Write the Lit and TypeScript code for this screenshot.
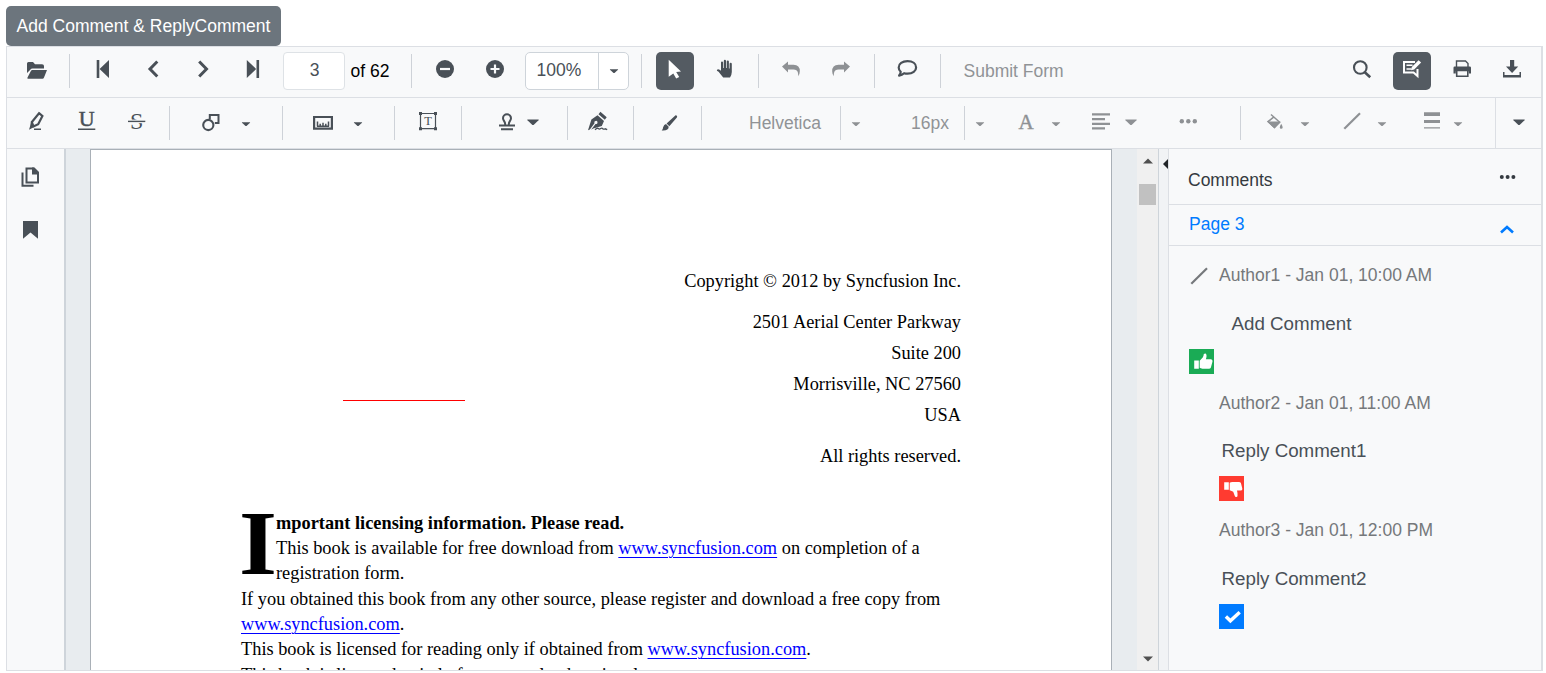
import { LitElement, html, css, svg, nothing } from "lit";
import { customElement, property } from "lit/decorators.js";

const icons: Record<string, unknown> = {
  open: svg`<path d="M2 14V4.500q0-1.500 1.500-1.500H8l2 2.200h7q2 0 2 1.800v2.500H7.500q-1.500 0-2 1z"/><path d="M7.300 11H22l-3 7.500q-.5 1.200-1.500 1.200H3q-1 0-.5-1.200L6 11.800q.4-.8 1.300-.8z"/>`,
  first: svg`<path d="M5.700 1h2.600v18H5.700zM18 1v18L8.600 10z"/>`,
  last: svg`<path d="M15.500 1h2.600v18h-2.600zM5.800 1v18L15.200 10z"/>`,
  prev: svg`<path class="line" stroke-width="3" d="M16.300 2.500 9 10l7.300 7.500"/>`,
  next: svg`<path class="line" stroke-width="3" d="M8.200 2.500 15.500 10l-7.300 7.500"/>`,
  minus: svg`<circle cx="12" cy="10" r="9"/><path fill="#f8f9fa" d="M7 8.900h10v2.200H7z"/>`,
  plus: svg`<circle cx="12" cy="10" r="9"/><path fill="#f8f9fa" d="M7.500 8.900h9v2.200h-9zM10.900 5.500h2.200v9h-2.200z"/>`,
  cursor: svg`<path d="M5.700.7 18 12.600l-4.800.3 3 5-3 1.700-2.900-5.200-4.600 3.300z"/>`,
  hand: svg`<path d="M7 3.600q0-1.200 1-1.200t1.100 1.200V9h.7V2q0-1.200 1.100-1.200T12 2v7h.7V2.600q0-1.200 1.100-1.200t1.100 1.200V9.500h.7V5q0-1.200 1.100-1.200T17.800 5v8q0 2.500-1.800 5.500H9.200Q6 14.500 4.600 12.700L2.900 11.700q-.4-1.500 1.300-1.500 1.500.2 2.800 1.600z"/>`,
  undo: svg`<path d="M3 7.600 9 2.500v3.300h5.500q6.500 0 6.300 6.700 0 3-1.700 4.700.3-2.300-.3-4-.8-2.700-4.300-2.700H9v3z"/>`,
  redo: svg`<path d="M21 7.600 15 2.500v3.300H9.500q-6.500 0-6.300 6.700 0 3 1.700 4.700-.3-2.300.3-4Q6 10.500 9.500 10.500H15v3z"/>`,
  comment: svg`<path class="line" stroke-width="2.200" stroke-linejoin="round" d="M12.500 2.200c5.200 0 8.600 2.600 8.600 6.200s-3.400 6.300-8.600 6.300q-2 0-3.400-.5-2 1.900-5 2.400 1.600-1.800 1.600-3.800-2-1.900-2-4.400c0-3.600 3.600-6.200 8.800-6.200z"/>`,
  search: svg`<circle class="line" cx="10.300" cy="8.500" r="6.300" stroke-width="2.100"/><path class="line" stroke-width="2.600" d="m14.800 13.200 5.400 5"/>`,
  annotate: svg`<path class="line" stroke-width="2" d="M15 3H4v10.500h9.500l4 3.500V10"/><path class="line" stroke-width="1.600" d="M6.500 6.200h6M6.500 10h5"/><path d="m11 11.200.8-3.300L18.600 1.200l2.500 2.200-6.900 7z"/>`,
  print: svg`<path class="line" stroke-width="1.400" d="M6.500 8V2h9l2.500 2.500V8"/><path d="M3.500 8.800q0-1.200 1.200-1.200h15.100q1.200 0 1.200 1.200V14.500h-2.300v-2.300H5.800v2.300H3.500z"/><path class="line" stroke-width="1.600" d="M6.700 12v5.200h11.100V12"/>`,
  download: svg`<path d="M10 1h4.200v6.500h4L12.100 14 6 7.500h4zM3 13h1.500v3h15v-3H21v5.500H3z"/>`,
  highlight: svg`<path class="line" stroke-width="2.200" d="M14 2.200 17.400 5l-4.200 8.200-4.800 2.300L6.900 11z"/><path d="M6 10.500 9.500 15l-1.800 1.700L4 18.800l1-3.300zM9 17.600h7v1.400H9z"/>`,
  underline: svg`<text x="11.700" y="15" text-anchor="middle" font-size="22" stroke="currentColor" stroke-width=".5">U</text><path d="M3 17.500h17.300v1.500H3z"/>`,
  strike: svg`<text x="11.700" y="18" text-anchor="middle" font-size="24">S</text><path fill="#f8f9fa" d="M3 8.600h18v3.600H3z"/><path d="M3 9.700h17.300v1.400H3z"/>`,
  shapes: svg`<path class="line" stroke-width="2" d="M10.800 8V4h8.700v8h-3.700"/><circle class="line" cx="9.300" cy="14" r="5.100" stroke-width="2.100"/>`,
  ruler: svg`<path class="line" stroke-width="2.200" d="M3.100 6h17.800v11.700H3.100z"/><path class="line" stroke-width="1.500" d="M6.500 15.500V10.500M9.200 15.500v-2.700M12 15.500v-3.700M14.800 15.500v-2.700M17.500 15.500V10.500M6 15.200h12"/>`,
  textbox: svg`<path class="line" stroke-width="1.200" d="M4.500 2.500h15v15.200h-15z"/><path d="M3 1h3v3H3zM18 1h3v3h-3zM3 16.200h3v3H3zM18 16.200h3v3h-3z"/><text x="12" y="14.300" text-anchor="middle" font-size="12.500">T</text>`,
  stamp: svg`<path class="line" stroke-width="2" d="M10 14c1-3-2-4-2-6.700a4 4 0 0 1 8 0C16 10 13 11 14 14"/><path d="M4 13.400h16v2.200H4zM6 17.200h12v2H6z"/>`,
  pen: svg`<path d="m12.500 3.200 1.900-2.400 6.300 5.500-1.900 2.500zM11.500 4.300l6.500 5.600-2.200 5.100-8.500 2.600-2.200 1.200 4.400-5.800a1.600 1.600 0 1 0-1-.8L3.900 18.500 2 19.200 5.400 8.500z"/><path class="line" stroke-width="1.300" d="M9 18.800q2.200-2.200 3.300-1.200t2.400 0 2 0 2.500.2l2 .8"/>`,
  brush: svg`<path d="M18.600 4.300q2.200.2 1.300 2.300L12.300 15.300l-2.700-2.700zM9 13.100l2.700 2.600Q11.600 20 4.700 19.400q1.300-.7 1.400-3.200Q7 13.500 9 13.100z"/>`,
  align: svg`<path d="M3 2.300h18v2.200H3zM3 7.100h13v2.200H3zM3 11.700h18v2.200H3zM3 16.200h13v2.200H3z"/>`,
  color: svg`<text x="12" y="17.600" text-anchor="middle" font-size="21" stroke="currentColor" stroke-width=".4">A</text>`,
  dots: svg`<circle cx="5.800" cy="10.200" r="2.200"/><circle cx="12.300" cy="10.200" r="2.200"/><circle cx="18.800" cy="10.200" r="2.200"/>`,
  fill: svg`<path class="line" stroke-width="1.500" d="M8 3.500 16.700 11.300l-5.200 5.200L5 10.600l6.300-5"/><path d="M4.200 10.500h13.300l-6 7zM18.200 12.700q3 5-.1 5-2.700-.2.100-5z"/>`,
  line: svg`<path class="line" stroke-width="2.200" d="M4.300 17.800 20 2.300"/>`,
  thickness: svg`<path d="M4 1.200h16v3.800H4zM4 9h16v3H4zM4 16.200h16v1.200H4z"/>`,
  caret: svg`<path d="M8 11.300h8q.3.200 0 .5L12.500 15h-1L8 11.800q-.3-.3 0-.5z"/>`,
  caretBig: svg`<path d="M6.500 8.500h11q.5.200 0 .8L12.600 14h-1.200L6.500 9.300q-.5-.5 0-.8z"/>`,
  caretCombo: svg`<path d="M8 10.300h8q.3.200 0 .5L12.500 14h-1L8 10.800q-.3-.3 0-.5z"/>`,
  pages: svg`<path class="line" stroke-width="2" d="M8.500 3.500h7l4.500 4.500v9.500H8.500z"/><path d="M14 2.500h2.500L21 7v2.500h-7zM3.500 7.500h2v12.300h10v2h-12z"/>`,
  bookmark: svg`<path d="M5 3h15v17.800L12.500 14.500 5 20.800z"/>`,
  chevronUp: svg`<path class="line" stroke-width="2.600" d="M6 15.500l6-5.500 6 5.500"/>`,
  up: svg`<path d="M4.200 10.500h4.600v8.200H4.200zM9.700 10.800l3.200-3.500q.8-1.700.8-3 2-1.700 2.800.7.300 2.300-.6 4.300h5.300q1.700.7 1.300 2.300l-1.600 6q-.5 1.200-2 1.200h-6.500q-1.800-.3-2.700-1z"/>`,
  down: svg`<path d="M4.200 5.200h4.600v7.600H4.200zM9.700 5.700q1-.7 2.700-.8h6.500q1.500 0 2 1.200l1.400 5.300q.3 1.900-1.300 2.100h-4q.9 3 .5 5.700-1.900 2-2.800-.4l-1.500-4q-1.500-1-3.500-1.500z"/>`,
  check: svg`<path class="line" stroke-width="3.400" d="m5.900 11.500 4.500 4.300 9.300-8.500"/>`,
};

const shared = css`
  :host { display: block; box-sizing: border-box; font-family: "Liberation Sans", Arial, sans-serif; font-size: 17.5px; }
  * { box-sizing: border-box; }
  svg { display: block; width: 24px; height: 24px; fill: currentColor; flex: none; overflow: visible; }
  svg text { font-family: "Liberation Serif", "Times New Roman", serif; }
  .line { fill: none; stroke: currentColor; }
`;

const icon = (name: string) => html`<svg viewBox="0 0 24 24" aria-hidden="true">${icons[name]}</svg>`;

type Item = { kind: "icon" | "caret" | "sep" | "text" | "input" | "combo" | "grow" | "more"; gap?: number; name?: string; w?: number; text?: string; on?: boolean; off?: boolean };
const b = (gap: number, name: string, extra: Partial<Item> = {}): Item => ({ kind: "icon", gap, name, w: 38, ...extra });
const c = (gap: number, extra: Partial<Item> = {}): Item => ({ kind: "caret", gap, name: "caret", w: 20, ...extra });
const s = (gap: number): Item => ({ kind: "sep", gap, w: 1 });
const off = { off: true };

const mainTools: Item[] = [
  b(11, "open"), s(13), b(14, "first"), b(12, "prev"), b(12, "next"), b(12, "last"),
  { kind: "input", gap: 11, w: 62, text: "3" }, { kind: "text", gap: 5.5, w: 48.5, text: "of 62" },
  s(12), b(14, "minus"), b(12, "plus"), { kind: "combo", gap: 11, w: 104, text: "100%" },
  s(12), b(14, "cursor", { on: true }), b(13, "hand"), s(13), b(13, "undo", off), b(12, "redo", off),
  s(14), b(13, "comment"), s(14), { kind: "text", gap: 22.5, w: 110, text: "Submit Form", off: true },
  { kind: "grow" }, b(0, "search"), b(12, "annotate", { on: true }), b(12, "print"), b(12, "download"), { kind: "icon", gap: 0, w: 10 },
];

const annotationTools: Item[] = [
  b(11, "highlight"), b(12, "underline"), b(12, "strike"), s(13), b(22, "shapes"), c(6), s(26),
  b(21, "ruler"), c(6), s(26), b(14, "textbox"), s(14), b(30, "stamp", { w: 30 }), c(1, { name: "caretBig" }), s(24),
  b(11, "pen"), s(16), b(16, "brush"), s(13),
  { kind: "text", gap: 47, w: 91, text: "Helvetica", off: true }, s(0), c(5, off),
  { kind: "text", gap: 45, w: 53, text: "16px", off: true }, s(0), c(5, off),
  b(17, "color", off), c(1, off), b(16, "align", off), c(1, { name: "caretBig", off: true }), b(28, "dots", off),
  s(33), b(15, "fill", off), c(1, off), b(18, "line", off), c(1, off), b(25, "thickness", { w: 30, off: true }), c(1, off),
  { kind: "grow" }, { kind: "more", w: 46 },
];

@customElement("viewer-toolbar")
class ViewerToolbar extends LitElement {
  @property({ attribute: false }) items: Item[] = [];
  static styles = [shared, css`
    :host { display: flex; align-items: center; height: 51px; background: #f8f9fa; border-bottom: 1px solid #dcdfe4; color: #495057; }
    :host(.primary) { padding-bottom: 2px; }
    .item { flex: none; height: 38px; display: flex; align-items: center; justify-content: center; border-radius: 5px; white-space: nowrap; }
    .on { background: #545b62; color: #fff; }
    .off { color: #8e9194; }
    .item.sep { height: 34px; background: #ced2d8; border-radius: 0; }
    .text { justify-content: flex-start; }
    .main { color: #000; }
    .text.off { color: #909396; }
    .grow { flex: 1; }
    .input, .combo { background: #fff; border: 1px solid #dee2e6; border-radius: 4px; padding: 0 0 2px 1px; }
    .combo { border-color: #ced4da; border-radius: 5px; padding: 0; justify-content: flex-start; }
    .zoom { width: 73px; height: 36px; padding: 7px 0 0 10.5px; border-right: 1px solid #ced4da; }
    .drop { width: 29px; display: flex; justify-content: center; }
    .item.more { height: 50px; border-left: 1px solid #dcdfe4; border-radius: 0; }
  `];
  private body(i: Item) {
    switch (i.kind) {
      case "sep": case "grow": return nothing;
      case "text": case "input": return i.text;
      case "combo": return html`<span class="zoom">${i.text}</span><span class="drop">${icon("caretCombo")}</span>`;
      case "more": return icon("caretBig");
      default: return i.name ? icon(i.name) : nothing;
    }
  }
  render() {
    return this.items.map((i) => i.kind === "grow" ? html`<span class="grow"></span>` : html`<div
      class="item ${i.kind} ${i.on ? "on" : ""} ${i.off ? "off" : i.kind === "text" ? "main" : ""}"
      style="width:${i.w}px;margin-left:${i.gap ?? 0}px">${this.body(i)}</div>`);
  }
}

@customElement("document-page")
class DocumentPage extends LitElement {
  static styles = [shared, css`
    :host { width: 1022px; height: 521px; background: #fff; border: 1px solid #a9b0b7; border-bottom: 0; padding: 116px 150px 0; overflow: hidden; position: relative;
      font: 18.35px/31px "Liberation Serif", "Times New Roman", serif; color: #000; }
    p { margin: 0; white-space: nowrap; }
    .legal { text-align: right; }
    .gap { margin-bottom: 10px; }
    .license { margin-top: 38.8px; line-height: 25.3px; }
    .cap { float: left; font-weight: bold; font-size: 92px; line-height: 64px; width: 35px; height: 64px; transform: scaleX(1.06); transform-origin: right; }
    a { color: #00f; text-decoration: underline; text-decoration-thickness: 1px; text-underline-offset: 3px; }
    .stroke { position: absolute; left: 252px; top: 250px; width: 122px; height: 1px; background: #f00; }
  `];
  render() {
    const link = html`<a>www.syncfusion.com</a>`;
    return html`
      <div class="legal">
        <p class="gap">Copyright © 2012 by Syncfusion Inc.</p>
        <p>2501 Aerial Center Parkway</p><p>Suite 200</p><p>Morrisville, NC 27560</p><p class="gap">USA</p>
        <p>All rights reserved.</p>
      </div>
      <div class="license">
        <span class="cap">I</span>
        <p><b>mportant licensing information. Please read.</b></p>
        <p>This book is available for free download from ${link} on completion of a</p>
        <p>registration form.</p>
        <p>If you obtained this book from any other source, please register and download a free copy from</p>
        <p>${link}.</p>
        <p>This book is licensed for reading only if obtained from ${link}.</p>
        <p>This book is licensed strictly for personal, educational use.</p>
      </div>
      <span class="stroke"></span>`;
  }
}

@customElement("comments-panel")
class CommentsPanel extends LitElement {
  static styles = [shared, css`
    :host { width: 373px; height: 100%; background: #f8f9fa; border-left: 1px solid #dcdfe4; color: #495057; }
    .head { height: 56px; display: flex; justify-content: space-between; align-items: center; padding: 8px 21px 0 19px; border-bottom: 1px solid #dcdfe4; color: #343a40; }
    .head svg { margin: -3px 0 0; }
    .group { height: 41px; display: flex; justify-content: space-between; align-items: center; padding: 0 22px 1px 20px; border-bottom: 1px solid #dcdfe4; color: #007bff; }
    .group svg { margin-top: 9px; }
    .thread { display: flex; flex-direction: column; padding: 17px 20px 0; line-height: 24px; }
    .author { display: flex; align-items: center; height: 24px; color: #75787b; }
    .author svg { margin: 6px 8px 0 -2px; }
    .text { margin: 25px 0 0 42.5px; height: 24px; font-size: 18.75px; }
    .reply { margin-left: 30px; margin-top: 17px; }
    .reply .text { margin-left: 2.5px; margin-top: 24px; height: 25px; }
    .reply + .reply .text { margin-top: 25px; }
    .badge { width: 25px; height: 25px; margin-top: 13px; display: grid; place-items: center; color: #fff; }
    .reply .badge { margin-top: 12px; }
    .accepted { background: #1aab55; }
    .rejected { background: #ff3b30; }
    .completed { background: #007bff; }
  `];
  render() {
    return html`
      <div class="head"><span>Comments</span><svg viewBox="0 0 24 24"><circle cx="5.800" cy="10" r="2"/><circle cx="11.600" cy="10" r="2"/><circle cx="17.400" cy="10" r="2"/></svg></div>
      <div class="group"><span>Page 3</span>${icon("chevronUp")}</div>
      <div class="thread">
        <div class="author">${icon("line")}<span>Author1 - Jan 01, 10:00 AM</span></div>
        <div class="text">Add Comment</div>
        <div class="badge accepted">${icon("up")}</div>
        <div class="reply">
          <div class="author">Author2 - Jan 01, 11:00 AM</div>
          <div class="text">Reply Comment1</div>
          <div class="badge rejected">${icon("down")}</div>
        </div>
        <div class="reply">
          <div class="author">Author3 - Jan 01, 12:00 PM</div>
          <div class="text">Reply Comment2</div>
          <div class="badge completed">${icon("check")}</div>
        </div>
      </div>`;
  }
}

@customElement("app-root")
class AppRoot extends LitElement {
  static styles = [shared, css`
    :host { height: 673px; padding: 6px 3px 2px 6px; background: #fff; overflow: hidden; }
    .action { display: block; width: 275px; height: 40px; border: 0; border-radius: 5px; background: #6c757d; color: #fff; font: inherit; padding: 0; text-align: center; }
    .viewer { height: 625px; border: 1px solid #dcdfe4; border-right-width: 2px; }
    .body { display: flex; height: 521px; }
    .side { width: 59px; border-right: 2px solid #ced4da; background: #f8f9fa; display: flex; flex-direction: column; padding: 16px 0 0 11px; gap: 29px; color: #495057; }
    .canvas { flex: 1; display: flex; background: #e8ecef; padding-left: 24px; overflow: hidden; }
    .scroll { width: 22px; background: #f0f0f0; border-right: 1px solid #ced4da; display: flex; flex-direction: column; align-items: center; padding: 9px 2px 8px 2px; color: #505050; }
    .scroll svg { width: 10px; height: 6px; }
    .thumb { width: 17px; height: 21px; margin: 20px 0 auto; background: #c1c1c1; }
    .grip { width: 9px; background: #f1f3f5; padding: 9px 0 0 3.5px; }
    .grip svg { width: 5.5px; height: 12px; color: #212529; }
  `];
  render() {
    return html`
      <button class="action">Add Comment &amp; ReplyComment</button>
      <div class="viewer">
        <viewer-toolbar class="primary" .items=${mainTools}></viewer-toolbar>
        <viewer-toolbar .items=${annotationTools}></viewer-toolbar>
        <div class="body">
          <nav class="side">${icon("pages")}${icon("bookmark")}</nav>
          <main class="canvas"><document-page></document-page></main>
          <div class="scroll">
            <svg viewBox="0 0 10 6"><path d="M0 5.500h10L5 .5z"/></svg>
            <span class="thumb"></span>
            <svg viewBox="0 0 10 6"><path d="M0 .5h10L5 5.500z"/></svg>
          </div>
          <div class="grip"><svg viewBox="0 0 6 12"><path d="M6 0v12L0 6z"/></svg></div>
          <comments-panel></comments-panel>
        </div>
      </div>`;
  }
}
